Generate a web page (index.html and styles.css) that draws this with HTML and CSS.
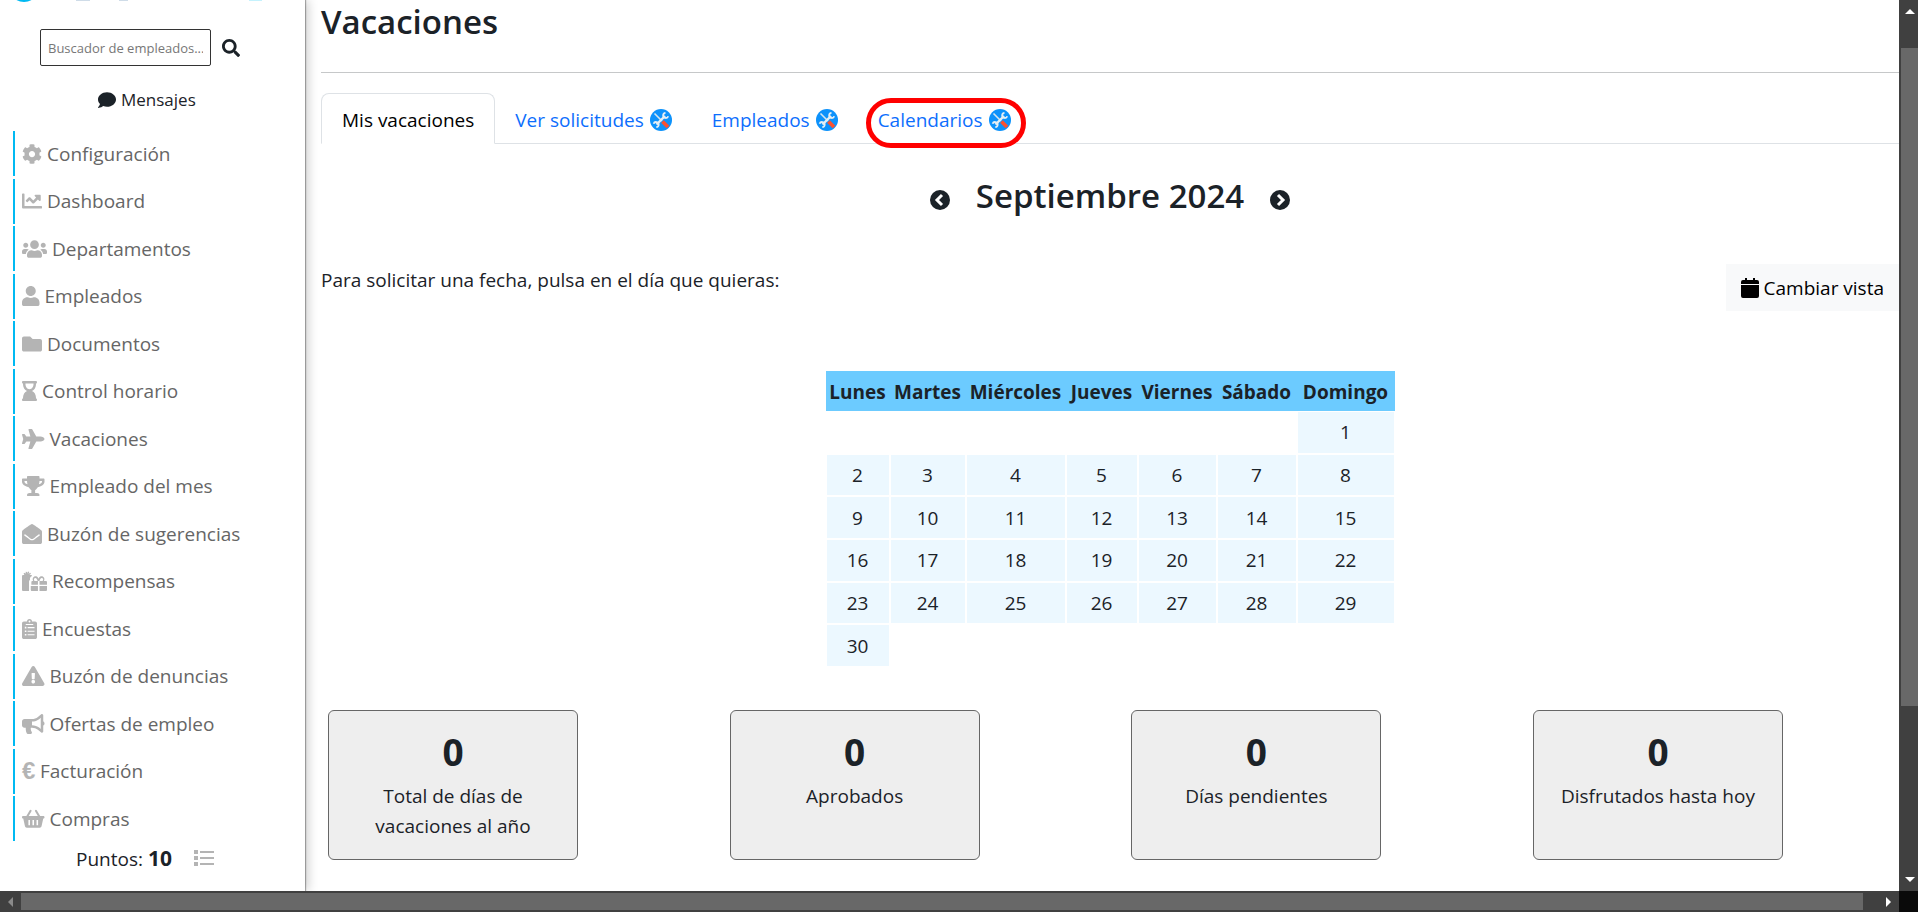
FILE: index.html
```html
<!DOCTYPE html>
<html lang="es">
<head>
  <meta charset="UTF-8">
  <meta name="viewport" content="width=device-width, initial-scale=1.0">
  <title>Vacaciones</title>
  <link rel="stylesheet" href="styles.css">
</head>
<body>
  <svg class="sprite" aria-hidden="true">
    <symbol id="tools" viewBox="0 0 22 22">
      <circle cx="11" cy="11" r="11" fill="#0d92fb"/>
      <path d="M4.500 4.500L12 12" stroke="#d5e6f0" stroke-width="1.600"/>
      <path d="M6.500 15.500L15 7" stroke="#e4eef4" stroke-width="2.400"/>
      <path d="M15.500 3.800a2.600 2.600 0 1 0 2.700 3.400M6.300 18.200a2.600 2.600 0 1 0-2.700-3.400" fill="none" stroke="#e4eef4" stroke-width="1.800"/>
      <path d="M12.500 12.500l5.500 5.500" stroke="#fb5130" stroke-width="3.800"/>
    </symbol>
  </svg>

  <div class="page">
    <aside class="sidebar">
      <svg class="logo" viewBox="0 0 305 3" preserveAspectRatio="xMinYMin">
        <ellipse cx="24" cy="-4" rx="10" ry="6" fill="#00b9f2"/>
        <path d="M76 0h14v1H76zM119 0h9v1h-9z" fill="#cfdce8"/>
        <path d="M249 0h13v1h-13z" fill="#c5f2fd"/>
      </svg>

      <form class="search">
        <input type="text" aria-label="Buscador de empleados" placeholder="Buscador de empleados...">
        <button type="button" aria-label="Buscar">
          <svg viewBox="0 0 512 512"><path d="M505 442.700L405.300 343c-4.500-4.500-10.600-7-17-7H372c27.600-35.300 44-79.700 44-128C416 93.100 322.900 0 208 0S0 93.100 0 208s93.100 208 208 208c48.300 0 92.700-16.400 128-44v16.300c0 6.400 2.500 12.500 7 17l99.700 99.700c9.400 9.400 24.600 9.400 33.900 0l28.300-28.300c9.400-9.400 9.400-24.600.1-34zM208 336c-70.700 0-128-57.200-128-128 0-70.700 57.200-128 128-128 70.700 0 128 57.200 128 128 0 70.700-57.200 128-128 128z"/></svg>
        </button>
      </form>

      <a class="messages" href="#">
        <svg viewBox="0 0 512 512"><path d="M256 32C114.600 32 0 125.100 0 240c0 49.600 21.400 95 57 130.700C44.500 421.100 2.700 466 2.200 466.500c-2.200 2.300-2.800 5.700-1.500 8.700S4.800 480 8 480c66.300 0 116-31.800 140.600-51.400 32.700 12.300 69 19.400 107.400 19.400 141.400 0 256-93.100 256-208S397.400 32 256 32z"/></svg>
        Mensajes
      </a>

      <nav class="menu">
        <a href="#"><svg viewBox="0 0 512 512"><path d="M487.400 315.700l-42.600-24.600c4.300-23.200 4.300-47 0-70.200l42.600-24.600c4.900-2.800 7.100-8.600 5.500-14-11.100-35.600-30-67.800-54.700-94.600-3.800-4.100-10-5.100-14.800-2.300L380.800 110c-17.900-15.400-38.500-27.300-60.800-35.100V25.800c0-5.600-3.900-10.500-9.400-11.700-36.700-8.200-74.300-7.800-109.200 0-5.500 1.200-9.400 6.100-9.400 11.700V75c-22.200 7.900-42.800 19.800-60.800 35.100L88.700 85.500c-4.900-2.800-11-1.900-14.800 2.300-24.700 26.700-43.600 58.900-54.700 94.600-1.700 5.400.6 11.200 5.500 14L67.300 221c-4.300 23.200-4.300 47 0 70.200l-42.600 24.600c-4.900 2.800-7.100 8.600-5.500 14 11.100 35.600 30 67.800 54.700 94.600 3.800 4.100 10 5.100 14.800 2.300l42.600-24.600c17.900 15.400 38.500 27.300 60.800 35.100v49.200c0 5.600 3.900 10.500 9.400 11.700 36.700 8.200 74.300 7.800 109.200 0 5.500-1.200 9.400-6.100 9.400-11.700v-49.200c22.200-7.900 42.800-19.800 60.800-35.100l42.600 24.600c4.900 2.800 11 1.900 14.800-2.300 24.700-26.700 43.600-58.900 54.700-94.600 1.500-5.500-.7-11.300-5.600-14.100zM256 336c-44.100 0-80-35.900-80-80s35.900-80 80-80 80 35.900 80 80-35.900 80-80 80z"/></svg>Configuración</a>
        <a href="#"><svg viewBox="0 0 512 512"><path d="M496 384H64V80c0-8.840-7.160-16-16-16H16C7.160 64 0 71.160 0 80v336c0 17.670 14.330 32 32 32h464c8.840 0 16-7.160 16-16v-32c0-8.840-7.160-16-16-16zM464 96H345.940c-21.380 0-32.090 25.850-16.970 40.970l32.400 32.400L288 242.750l-73.370-73.370c-12.500-12.500-32.760-12.500-45.250 0l-68.690 68.690c-6.250 6.250-6.250 16.380 0 22.630l22.620 22.620c6.250 6.250 16.380 6.250 22.630 0L192 237.250l73.370 73.370c12.500 12.500 32.760 12.500 45.250 0l96-96 32.400 32.400c15.120 15.120 40.970 4.410 40.970-16.970V112c.01-8.840-7.150-16-15.990-16z"/></svg>Dashboard</a>
        <a href="#"><svg viewBox="0 0 640 512"><path d="M96 224c35.300 0 64-28.700 64-64s-28.700-64-64-64-64 28.700-64 64 28.700 64 64 64zm448 0c35.300 0 64-28.700 64-64s-28.700-64-64-64-64 28.700-64 64 28.700 64 64 64zm32 32h-64c-17.600 0-33.500 7.100-45.100 18.600 40.300 22.100 68.900 62 75.100 109.400h66c17.700 0 32-14.300 32-32v-32c0-35.300-28.700-64-64-64zm-256 0c61.900 0 112-50.100 112-112S381.900 32 320 32 208 82.100 208 144s50.100 112 112 112zm76.800 32h-8.300c-20.800 10-43.900 16-68.500 16s-47.600-6-68.500-16h-8.300C179.600 288 128 339.600 128 403.200V432c0 26.500 21.500 48 48 48h288c26.500 0 48-21.500 48-48v-28.800c0-63.600-51.600-115.200-115.200-115.200zm-223.700-13.400C161.500 263.100 145.600 256 128 256H64c-35.300 0-64 28.700-64 64v32c0 17.700 14.300 32 32 32h65.900c6.300-47.400 34.900-87.300 75.200-109.400z"/></svg>Departamentos</a>
        <a href="#"><svg viewBox="0 0 448 512"><path d="M224 256c70.700 0 128-57.300 128-128S294.700 0 224 0 96 57.300 96 128s57.300 128 128 128zm89.600 32h-16.700c-22.200 10.200-46.900 16-72.900 16s-50.600-5.800-72.900-16h-16.700C60.200 288 0 348.200 0 422.400V464c0 26.500 21.500 48 48 48h352c26.500 0 48-21.500 48-48v-41.600c0-74.200-60.200-134.400-134.400-134.400z"/></svg>Empleados</a>
        <a href="#"><svg viewBox="0 0 512 512"><path d="M464 128H272l-64-64H48C21.490 64 0 85.490 0 112v288c0 26.510 21.490 48 48 48h416c26.510 0 48-21.490 48-48V176c0-26.510-21.490-48-48-48z"/></svg>Documentos</a>
        <a href="#"><svg viewBox="0 0 384 512"><path fill-rule="evenodd" d="M24 0h336c32 0 32 64 0 64 0 101-45 170-104 192 59 22 104 91 104 192 32 0 32 64 0 64H24c-32 0-32-64 0-64 0-101 45-170 104-192C69 234 24 165 24 64c-32 0-32-64 0-64zm64 64c0 82 40 144 104 144S296 146 296 64z"/></svg>Control horario</a>
        <a href="#"><svg viewBox="0 0 576 512"><path d="M480 192H365.710L260.610 8.060A16.014 16.014 0 0 0 246.710 0h-65.500c-10.630 0-18.300 10.170-15.380 20.390L214.860 192H112l-43.200-57.600c-3.020-4.030-7.770-6.400-12.800-6.400H16.010C5.600 128-2.040 137.780.49 147.880L32 256 .49 364.120C-2.040 374.220 5.600 384 16.010 384H56c5.040 0 9.780-2.370 12.800-6.400L112 320h102.860l-49.030 171.600c-2.920 10.220 4.750 20.400 15.380 20.400h65.500c5.740 0 11.040-3.080 13.890-8.060L365.710 320H480c35.350 0 96-28.650 96-64s-60.650-64-96-64z"/></svg>Vacaciones</a>
        <a href="#"><svg viewBox="0 0 576 512"><path d="M552 64H448V24c0-13.300-10.700-24-24-24H152c-13.300 0-24 10.700-24 24v40H24C10.700 64 0 74.700 0 88v56c0 35.700 22.500 72.400 61.900 100.700 31.500 22.700 69.800 37.100 110 41.700C203.300 338.500 240 360 240 360v72h-48c-35.300 0-64 20.700-64 56v12c0 6.600 5.400 12 12 12h296c6.600 0 12-5.400 12-12v-12c0-35.300-28.700-56-64-56h-48v-72s36.700-21.500 68.100-73.600c40.300-4.600 78.600-19 110-41.700 39.300-28.300 61.900-65 61.900-100.700V88c0-13.300-10.700-24-24-24zM99.300 192.800C74.900 175.200 64 155.600 64 144v-16h64.200c1 32.600 5.800 61.200 12.800 86.200-15.100-5.200-29.200-12.400-41.700-21.400zM512 144c0 16.100-17.700 36.100-35.300 48.800-12.500 9-26.700 16.200-41.800 21.400 7-25 11.800-53.600 12.800-86.200H512v16z"/></svg>Empleado del mes</a>
        <a href="#"><svg viewBox="0 0 512 512"><path d="M512 464c0 26.510-21.490 48-48 48H48c-26.510 0-48-21.490-48-48V200.724a48 48 0 0 1 18.387-37.776c24.913-19.529 45.501-35.365 164.200-121.511C199.412 29.170 232.797-.347 256 .003c23.198-.354 56.596 29.172 73.413 41.433 118.687 86.137 139.303 101.995 164.200 121.512A48 48 0 0 1 512 200.724V464zm-65.666-196.605c-2.563-3.728-7.700-4.595-11.339-1.907-22.845 16.873-55.462 40.705-105.582 77.079-16.825 12.266-50.210 41.781-73.413 41.430-23.211.344-56.559-29.143-73.413-41.430-50.114-36.370-82.734-60.204-105.582-77.079-3.639-2.688-8.776-1.821-11.339 1.907l-9.072 13.196a7.998 7.998 0 0 0 1.839 10.967c22.887 16.899 55.454 40.690 105.303 76.868 20.274 14.781 56.524 47.813 92.264 47.573 35.724.242 71.961-32.771 92.263-47.573 49.850-36.179 82.418-59.970 105.303-76.868a7.998 7.998 0 0 0 1.839-10.967l-9.071-13.196z"/></svg>Buzón de sugerencias</a>
        <a href="#"><svg viewBox="0 0 640 512"><path d="M32 100h30L40 66l28-20 22 26 8-50 34 4-4 42 26-56 32 14-20 48 44-30 20 28-42 28h40c16 0 28 10 30 28-42 14-62 54-54 100-16 8-24 20-24 40v244H32c-18 0-32-14-32-32V132c0-18 14-32 32-32z"/><path d="M240 352V280c0-14 10-24 24-24h24c-40-60 10-140 80-120 30 8 46 40 56 60 10-20 26-52 56-60 70-20 120 60 80 120h56c14 0 24 10 24 24v72H448V256h-40v96zm84-96h76c-12-40-30-76-54-76-44 0-54 56-22 76zm124 0h76c32-20 22-76-22-76-24 0-42 36-54 76zM224 384h184v128H256c-18 0-32-14-32-32zm224 0h192v96c0 18-14 32-32 32H448z" fill-rule="evenodd"/></svg>Recompensas</a>
        <a href="#"><svg viewBox="0 0 384 512"><path fill-rule="evenodd" d="M48 64h80a64 64 0 0 1 128 0h80c26 0 48 22 48 48v352c0 26-22 48-48 48H48c-26 0-48-22-48-48V112c0-26 22-48 48-48zm144-24a24 24 0 1 0 0 48 24 24 0 1 0 0-48zM96 128v24h192v-24zM72 200v40h40v-40zm72 6v28h176v-28zM72 292v40h40v-40zm72 6v28h176v-28zM72 384v40h40v-40zm72 6v28h176v-28z"/></svg>Encuestas</a>
        <a href="#"><svg viewBox="0 0 576 512"><path d="M569.517 440.013C587.975 472.007 564.806 512 527.940 512H48.054c-36.937 0-59.999-40.055-41.577-71.987L246.423 23.985c18.467-32.009 64.720-31.951 83.154 0l239.940 416.028zM288 354c-25.405 0-46 20.595-46 46s20.595 46 46 46 46-20.595 46-46-20.595-46-46-46zm-43.673-165.346l7.418 136c.347 6.364 5.609 11.346 11.982 11.346h48.546c6.373 0 11.635-4.982 11.982-11.346l7.418-136c.375-6.874-5.098-12.654-11.982-12.654h-63.383c-6.884 0-12.356 5.780-11.981 12.654z"/></svg>Buzón de denuncias</a>
        <a href="#"><svg viewBox="0 0 576 512"><path d="M576 240c0-23.630-12.950-44.040-32-55.120V32.010C544 23.260 537.020 0 512 0c-7.120 0-14.190 2.380-19.980 7.020l-85.030 68.030C364.280 109.190 310.660 128 256 128H64c-35.350 0-64 28.650-64 64v96c0 35.350 28.650 64 64 64h33.700c-1.390 10.480-2.180 21.140-2.180 32 0 39.770 9.260 77.350 25.560 110.940 5.190 10.690 16.520 17.060 28.400 17.060h74.280c26.050 0 41.690-29.840 25.900-50.560-16.400-21.520-26.150-48.360-26.150-77.440 0-11.110 1.620-21.790 4.410-32H256c54.660 0 108.280 18.810 150.980 52.950l85.030 68.030a32.023 32.023 0 0 0 19.980 7.020c24.920 0 32-22.780 32-32V295.130C563.050 284.040 576 263.630 576 240zm-96 141.420l-33.050-26.440C392.950 311.780 325.120 288 256 288v-96c69.120 0 136.950-23.780 190.950-66.980L480 98.580v282.840z"/></svg>Ofertas de empleo</a>
        <a href="#"><span class="euro">€</span>Facturación</a>
        <a href="#"><svg viewBox="0 0 576 512"><path d="M130 200L220 46M446 200L356 46" fill="none" stroke="#b4b4b4" stroke-width="52" stroke-linecap="round"/><path fill-rule="evenodd" d="M24 176h528c32 0 32 64 0 64h-8l-44 204c-5 22-22 36-46 36H122c-24 0-41-14-46-36L32 240h-8c-32 0-32-64 0-64zm140 104v136h40V280zm104 0v136h40V280zm104 0v136h40V280z"/></svg>Compras</a>
      </nav>

      <div class="points">
        <span>Puntos: <strong>10</strong></span>
        <a href="#" aria-label="Historial de puntos">
          <svg viewBox="0 0 20 20"><path d="M0 2h4v4H0zM0 8h4v4H0zM0 14h4v4H0zM6 3h14v2H6zM6 9h14v2H6zM6 15h14v2H6z"/></svg>
        </a>
      </div>
    </aside>

    <main class="content">
      <h1>Vacaciones</h1>
      <hr>

      <nav class="tabs">
        <a class="tab active" href="#">Mis vacaciones</a>
        <a class="tab" href="#">Ver solicitudes <svg><use href="#tools"/></svg></a>
        <a class="tab" href="#">Empleados <svg><use href="#tools"/></svg></a>
        <a class="tab marked" href="#">Calendarios <svg><use href="#tools"/></svg></a>
      </nav>

      <div class="month">
        <button type="button" aria-label="Mes anterior"><svg viewBox="0 0 20 20"><circle cx="10" cy="10" r="10"/><path d="M12 5l-5 5 5 5" fill="none" stroke="#fff" stroke-width="3"/></svg></button>
        <h2>Septiembre 2024</h2>
        <button type="button" aria-label="Mes siguiente"><svg viewBox="0 0 20 20"><circle cx="10" cy="10" r="10"/><path d="M8 5l5 5-5 5" fill="none" stroke="#fff" stroke-width="3"/></svg></button>
      </div>

      <div class="toolbar">
        <p>Para solicitar una fecha, pulsa en el día que quieras:</p>
        <button class="view-btn" type="button">
          <svg viewBox="0 0 18 20"><path d="M0 7h18v11a2 2 0 0 1-2 2H2a2 2 0 0 1-2-2zM0 6V4a2 2 0 0 1 2-2h2V0h2v2h6V0h2v2h2a2 2 0 0 1 2 2v2z"/></svg>
          Cambiar vista
        </button>
      </div>

      <table class="calendar">
        <colgroup>
          <col class="lun"><col class="mar"><col class="mie"><col class="jue"><col class="vie"><col class="sab"><col class="dom">
        </colgroup>
        <thead>
          <tr><th>Lunes</th><th>Martes</th><th>Miércoles</th><th>Jueves</th><th>Viernes</th><th>Sábado</th><th>Domingo</th></tr>
        </thead>
        <tbody>
          <tr><td></td><td></td><td></td><td></td><td></td><td></td><td>1</td></tr>
          <tr><td>2</td><td>3</td><td>4</td><td>5</td><td>6</td><td>7</td><td>8</td></tr>
          <tr><td>9</td><td>10</td><td>11</td><td>12</td><td>13</td><td>14</td><td>15</td></tr>
          <tr><td>16</td><td>17</td><td>18</td><td>19</td><td>20</td><td>21</td><td>22</td></tr>
          <tr><td>23</td><td>24</td><td>25</td><td>26</td><td>27</td><td>28</td><td>29</td></tr>
          <tr><td>30</td><td></td><td></td><td></td><td></td><td></td><td></td></tr>
        </tbody>
      </table>

      <div class="cards">
        <div class="card"><strong>0</strong><p>Total de días de vacaciones al año</p></div>
        <div class="card"><strong>0</strong><p>Aprobados</p></div>
        <div class="card"><strong>0</strong><p>Días pendientes</p></div>
        <div class="card"><strong>0</strong><p>Disfrutados hasta hoy</p></div>
      </div>
    </main>
  </div>

  <div class="vbar">
    <svg viewBox="0 0 10 5"><path d="M5 0l5 5H0z" fill="#fff"/></svg>
    <div class="track"><div class="thumb"></div></div>
    <svg viewBox="0 0 10 5"><path d="M0 0h10L5 5z" fill="#fff"/></svg>
  </div>
  <div class="hbar">
    <svg viewBox="0 0 5 10"><path d="M5 0v10L0 5z" fill="#8a8a8a"/></svg>
    <div class="thumb"></div>
    <svg viewBox="0 0 5 10"><path d="M0 0v10l5-5z" fill="#fff"/></svg>
  </div>
  <div class="corner"></div>
</body>
</html>
```
FILE: styles.css
```css
* {
  box-sizing: border-box;
}
body {
  margin: 0;
  height: 100vh;
  display: grid;
  grid-template-columns: 1fr 19px;
  grid-template-rows: 1fr 21px;
  overflow: hidden;
  font-family: "Open Sans", "Noto Sans", sans-serif;
  font-size: 19px;
  line-height: 30px;
  color: #1b2228;
}
h1, h2, p {
  margin: 0;
}
a {
  text-decoration: none;
}
button {
  font: inherit;
  border: 0;
  padding: 0;
  background: none;
}
.sprite {
  position: absolute;
  width: 0;
  height: 0;
}
.page {
  display: flex;
  min-width: 0;
  min-height: 0;
  overflow: hidden;
}

/* sidebar */
.sidebar {
  width: 305px;
  flex-shrink: 0;
  display: flex;
  flex-direction: column;
  box-shadow: 1px 0 1px rgba(0, 0, 0, 0.3), 3px 0 10px rgba(0, 0, 0, 0.2);
}
.logo {
  height: 3px;
  flex-shrink: 0;
}
.search {
  display: flex;
  align-items: center;
  gap: 11px;
  padding: 26px 0 0 40px;
}
.search input {
  width: 171px;
  height: 37px;
  padding: 0 7px;
  border: 1px solid #333;
  border-radius: 2px;
  font-family: inherit;
  font-size: 13px;
}
.search input::placeholder {
  color: #777;
}
.search button {
  display: flex;
}
.search svg {
  width: 18px;
  height: 18px;
  fill: #1b2228;
}
.messages {
  display: flex;
  align-items: center;
  gap: 5px;
  margin: 19px 0 16px;
  padding-left: 98px;
  font-size: 17px;
  color: #1b2228;
}
.messages svg {
  width: 18px;
  height: 18px;
  fill: #1b2228;
}
.menu {
  flex: 1;
  display: flex;
  flex-direction: column;
  justify-content: space-between;
  padding-left: 13px;
}
.menu a {
  display: flex;
  align-items: center;
  gap: 5px;
  height: 45px;
  padding-left: 7px;
  border-left: 2px solid #00b9f2;
  color: #666;
}
.menu svg {
  height: 20px;
  fill: #b4b4b4;
}
.euro {
  width: 13px;
  font-family: "Liberation Sans", sans-serif;
  font-size: 24px;
  font-weight: bold;
  color: #b4b4b4;
}
.points {
  display: flex;
  align-items: center;
  gap: 22px;
  height: 50px;
  padding: 0 0 16px 76px;
}
.points strong {
  font-size: 21px;
}
.points a {
  display: flex;
}
.points svg {
  width: 20px;
  height: 20px;
  fill: #b4b4b4;
}

/* main area */
.content {
  flex: 1;
  min-width: 0;
  padding-left: 16px;
}
h1, h2 {
  font-size: 33px;
  font-weight: 600;
  line-height: 42px;
}
h1 {
  padding-top: 1px;
}
hr {
  height: 1px;
  margin: 29px 0 20px;
  border: 0;
  background: #c6c8c9;
}
.tabs {
  display: flex;
  height: 51px;
  border-bottom: 1px solid #dee2e6;
}
.tab {
  position: relative;
  display: flex;
  align-items: center;
  gap: 6px;
  height: 51px;
  padding: 2px 20px 0;
  color: #0d6efd;
}
.tab.active {
  border: 1px solid #dee2e6;
  border-bottom-color: #fff;
  border-radius: 8px 8px 0 0;
  background: #fff;
  color: #000;
}
.tab svg {
  width: 22px;
  height: 22px;
}
/* red ring around the tab that is being pointed out */
.tab.marked::after {
  content: "";
  position: absolute;
  inset: 5px 5px -4px 8px;
  border: 5px solid #f00;
  border-radius: 25px;
}
.month {
  display: flex;
  justify-content: center;
  align-items: center;
  gap: 26px;
  margin-top: 31px;
}
.month button {
  display: flex;
  padding-top: 8px;
}
.month svg {
  width: 20px;
  height: 20px;
  fill: #1b2228;
}
.toolbar {
  display: flex;
  justify-content: space-between;
  align-items: flex-start;
  margin-top: 47px;
}
.toolbar p {
  padding-top: 1px;
}
.view-btn {
  display: flex;
  align-items: center;
  gap: 5px;
  height: 47px;
  padding: 0 15px;
  background: #f8f9fa;
  color: #000;
}
.view-btn svg {
  width: 18px;
  height: 20px;
}
.calendar {
  width: 569px;
  height: 296px;
  margin: 60px auto 43px;
  table-layout: fixed;
  border-spacing: 0;
  text-align: center;
}
.calendar th {
  height: 40px;
  padding: 1px 0 0;
  background: #6ccbff;
}
.calendar td {
  padding: 0;
  border: 1px solid #fff;
  background: #ecf8ff;
}
.calendar td:empty {
  background: none;
}
.lun { width: 64px; }
.mar { width: 76px; }
.mie { width: 100px; }
.jue { width: 72px; }
.vie { width: 79px; }
.sab { width: 80px; }
.dom { width: 98px; }
.cards {
  display: flex;
  justify-content: space-between;
  padding: 0 116px 0 7px;
}
.card {
  width: 250px;
  height: 150px;
  padding: 20px 24px;
  border: 1px solid #666;
  border-radius: 6px;
  background: #eee;
  text-align: center;
}
.card strong {
  display: block;
  font-size: 37px;
  line-height: 42px;
}
.card p {
  padding-top: 8px;
}

/* scrollbars */
.vbar, .hbar {
  display: flex;
  align-items: center;
  background: #404040;
}
.vbar {
  flex-direction: column;
  padding: 9px 0 9px 2px;
}
.vbar svg {
  width: 10px;
  height: 5px;
}
.track {
  flex: 1;
  width: 100%;
  padding: 34px 0 7px;
}
.vbar .thumb {
  height: 80%;
  background: #686868;
}
.hbar {
  gap: 8px;
  padding: 2px 8px;
}
.hbar svg {
  width: 5px;
  height: 10px;
}
.hbar .thumb {
  flex: 1;
  height: 17px;
  margin-right: 15px;
  background: #686868;
}
.corner {
  background: #0a0a0a;
}
```
